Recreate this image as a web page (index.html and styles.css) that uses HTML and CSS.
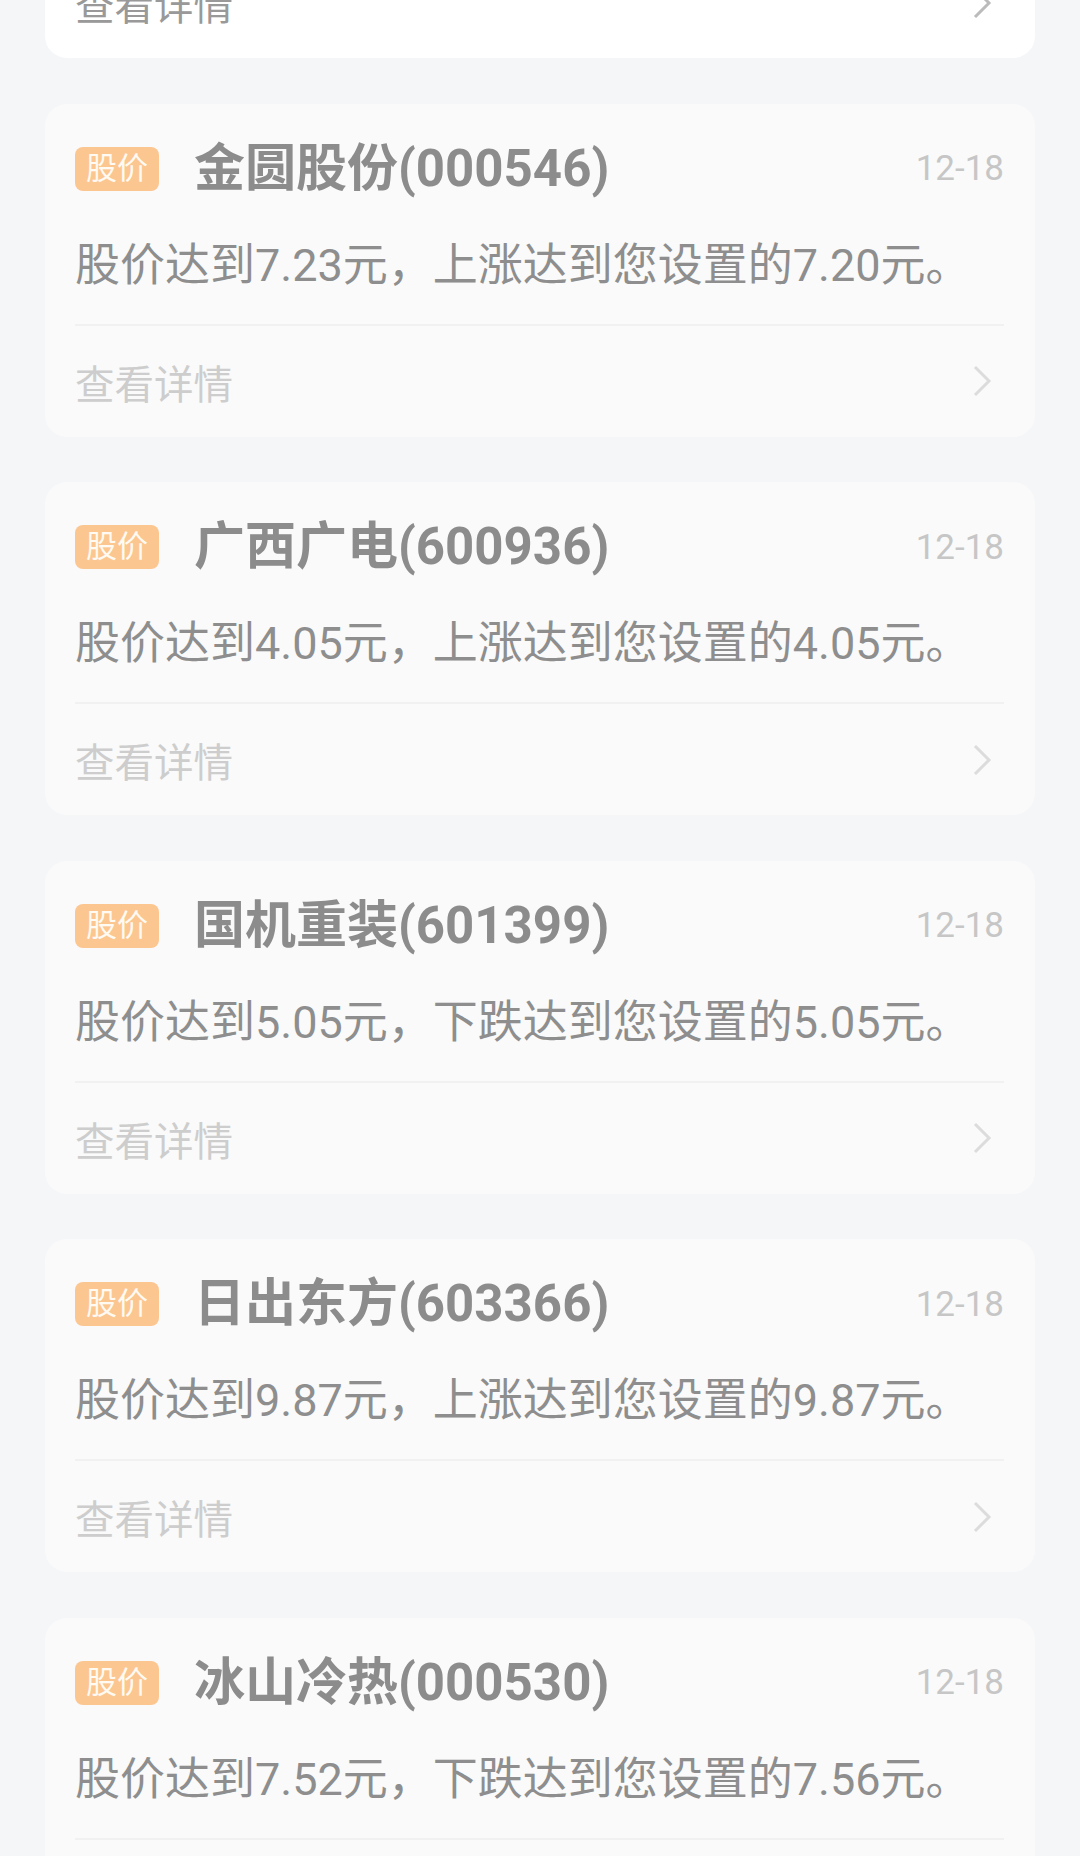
FILE: index.html
```html
<!doctype html>
<html>
<head>
<meta charset='utf-8' />
<title>股价提醒</title>
<link rel="stylesheet" href="styles.css">
</head>
<body>
<div class="list">
	<div class="card unread">
		<div class="head">
			<span class="tag">股价</span>
			<span class="name">华银电力(600744)</span>
			<span class="date">12-18</span>
		</div>
		<p class="msg">股价达到3.12元，上涨达到您设置的3.10元。</p>
		<div class="more">
			<span>查看详情</span>
			<svg class="arrow" width="20" height="32" viewBox="0 0 20 32"><path d="M3 2 L17 16 L3 30" fill="none" stroke="currentColor" stroke-width="3"/></svg>
		</div>
	</div>
	<div class="card">
		<div class="head">
			<span class="tag">股价</span>
			<span class="name">金圆股份(000546)</span>
			<span class="date">12-18</span>
		</div>
		<p class="msg">股价达到7.23元，上涨达到您设置的7.20元。</p>
		<div class="more">
			<span>查看详情</span>
			<svg class="arrow" width="20" height="32" viewBox="0 0 20 32"><path d="M3 2 L17 16 L3 30" fill="none" stroke="currentColor" stroke-width="3"/></svg>
		</div>
	</div>
	<div class="card">
		<div class="head">
			<span class="tag">股价</span>
			<span class="name">广西广电(600936)</span>
			<span class="date">12-18</span>
		</div>
		<p class="msg">股价达到4.05元，上涨达到您设置的4.05元。</p>
		<div class="more">
			<span>查看详情</span>
			<svg class="arrow" width="20" height="32" viewBox="0 0 20 32"><path d="M3 2 L17 16 L3 30" fill="none" stroke="currentColor" stroke-width="3"/></svg>
		</div>
	</div>
	<div class="card">
		<div class="head">
			<span class="tag">股价</span>
			<span class="name">国机重装(601399)</span>
			<span class="date">12-18</span>
		</div>
		<p class="msg">股价达到5.05元，下跌达到您设置的5.05元。</p>
		<div class="more">
			<span>查看详情</span>
			<svg class="arrow" width="20" height="32" viewBox="0 0 20 32"><path d="M3 2 L17 16 L3 30" fill="none" stroke="currentColor" stroke-width="3"/></svg>
		</div>
	</div>
	<div class="card">
		<div class="head">
			<span class="tag">股价</span>
			<span class="name">日出东方(603366)</span>
			<span class="date">12-18</span>
		</div>
		<p class="msg">股价达到9.87元，上涨达到您设置的9.87元。</p>
		<div class="more">
			<span>查看详情</span>
			<svg class="arrow" width="20" height="32" viewBox="0 0 20 32"><path d="M3 2 L17 16 L3 30" fill="none" stroke="currentColor" stroke-width="3"/></svg>
		</div>
	</div>
	<div class="card">
		<div class="head">
			<span class="tag">股价</span>
			<span class="name">冰山冷热(000530)</span>
			<span class="date">12-18</span>
		</div>
		<p class="msg">股价达到7.52元，下跌达到您设置的7.56元。</p>
		<div class="more">
			<span>查看详情</span>
			<svg class="arrow" width="20" height="32" viewBox="0 0 20 32"><path d="M3 2 L17 16 L3 30" fill="none" stroke="currentColor" stroke-width="3"/></svg>
		</div>
	</div>
</div>
</body>
</html>
```
FILE: styles.css
```css
*{margin: 0;padding: 0;}
html,body{height: 100%;overflow: hidden;}
body{background: #f5f6f8;font-family: Roboto, "Noto Sans CJK SC", sans-serif;}
/* list is scrolled: first card only shows its bottom edge */
.list{margin-top: -275px;padding: 0 45px;display: flex;flex-direction: column;gap: 45.5px;}
.card{height: 333px;box-sizing: border-box;padding: 43px 31px 0 30px;background: #fafafa;border-radius: 22px;}
.head{display: flex;align-items: center;height: 44px;}
.tag{height: 44px;line-height: 44px;padding: 0 11px;border-radius: 8px;background: #fcc690;color: #fffaf2;font-size: 31px;}
.name{flex: 1;margin-left: 35px;font-size: 51px;font-weight: bold;color: #8c8c8c;line-height: 60px;}
.date{font-size: 35px;color: #c6c6c6;}
.msg{margin-top: 45px;line-height: 60px;font-size: 45px;color: #8e8e8e;padding-bottom: 28px;border-bottom: 2px solid #f1f1f1;}
.more{height: 111px;display: flex;align-items: center;justify-content: space-between;font-size: 39.5px;color: #cdcdcd;}
.arrow{margin-right: 12px;color: #dcdcdc;}
.unread{background: #fff;}
.unread .name{color: #333;}
.unread .msg{color: #333;}
.unread .more{color: #999;}
.unread .arrow{color: #bbb;}
```
